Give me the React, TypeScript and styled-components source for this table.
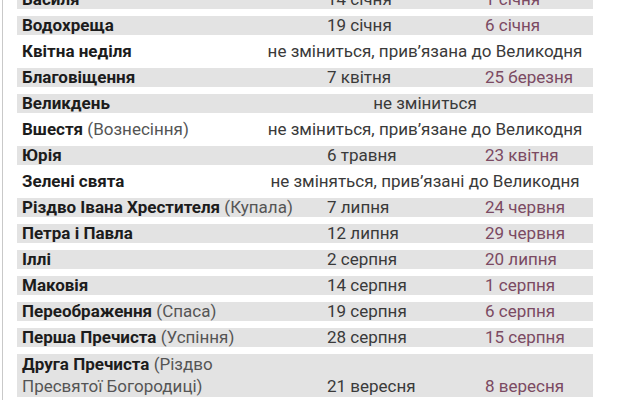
import React from "react";
import styled, { createGlobalStyle } from "styled-components";

const Global = createGlobalStyle`
  html, body { margin: 0; padding: 0; background: #ffffff; }
  body { width: 620px; height: 400px; overflow: hidden; }
`;

const Page = styled.div`
  width: 617px;
  height: 400px;
  margin-left: 2px;
  border-left: 1px solid #c9c9c9;
  padding-left: 14px;
  box-sizing: border-box;
  overflow: hidden;
  font-family: Roboto, "Liberation Sans", sans-serif;
  font-size: 17px;
  color: #3a3a3a;
`;

const List = styled.div`
  display: flex;
  flex-direction: column;
  gap: 7px;
  margin-top: -10px;
  width: 576px;
`;

const Band = styled.div<{ $grey: boolean; $tall?: boolean }>`
  background: ${(p) => (p.$grey ? "#e3e3e3" : "transparent")};
  line-height: ${(p) => (p.$tall ? "21.5px" : "19px")};
  height: ${(p) => (p.$tall ? "43px" : "19px")};
  padding-left: 5px;
  box-sizing: border-box;
  white-space: nowrap;
`;

const DateRow = styled(Band)`
  display: grid;
  grid-template-columns: 305px 158px 1fr;
  align-items: end;
`;

const SpanRow = styled(Band)`
  display: grid;
  grid-template-columns: 235px 1fr;
`;

const Name = styled.div`
  font-weight: 700;
  color: #1c1c1c;
`;

const Note = styled.span`
  font-weight: 400;
  color: #555555;
`;

const OldDate = styled.div`
  color: #3a3a3a;
`;

const NewDate = styled.div`
  color: #7b4a62;
`;

const Centered = styled.div`
  text-align: center;
  color: #3a3a3a;
`;

type Row =
  | { name: string; note?: string; old: string; now: string; grey: boolean }
  | { name: string; note?: string; span: string; grey: boolean };

const rows: Row[] = [
  { name: "Василя", old: "14 січня", now: "1 січня", grey: true },
  { name: "Водохреща", old: "19 січня", now: "6 січня", grey: true },
  { name: "Квітна неділя", span: "не зміниться, прив’язана до Великодня", grey: false },
  { name: "Благовіщення", old: "7 квітня", now: "25 березня", grey: true },
  { name: "Великдень", span: "не зміниться", grey: true },
  { name: "Вшестя", note: "(Вознесіння)", span: "не зміниться, прив’язане до Великодня", grey: false },
  { name: "Юрія", old: "6 травня", now: "23 квітня", grey: true },
  { name: "Зелені свята", span: "не зміняться, прив’язані до Великодня", grey: false },
  { name: "Різдво Івана Хрестителя", note: "(Купала)", old: "7 липня", now: "24 червня", grey: true },
  { name: "Петра і Павла", old: "12 липня", now: "29 червня", grey: true },
  { name: "Іллі", old: "2 серпня", now: "20 липня", grey: true },
  { name: "Маковія", old: "14 серпня", now: "1 серпня", grey: true },
  { name: "Переображення", note: "(Спаса)", old: "19 серпня", now: "6 серпня", grey: true },
  { name: "Перша Пречиста", note: "(Успіння)", old: "28 серпня", now: "15 серпня", grey: true },
];

export default function App() {
  return (
    <>
      <Global />
      <Page>
        <List>
          {rows.map((r) =>
            "span" in r ? (
              <SpanRow key={r.name} $grey={r.grey}>
                <Name>
                  {r.name}
                  {r.note && <Note> {r.note}</Note>}
                </Name>
                <Centered>{r.span}</Centered>
              </SpanRow>
            ) : (
              <DateRow key={r.name} $grey={r.grey}>
                <Name>
                  {r.name}
                  {r.note && <Note> {r.note}</Note>}
                </Name>
                <OldDate>{r.old}</OldDate>
                <NewDate>{r.now}</NewDate>
              </DateRow>
            )
          )}
          <DateRow $grey $tall>
            <Name>
              Друга Пречиста <Note>(Різдво</Note>
              <br />
              <Note>Пресвятої Богородиці)</Note>
            </Name>
            <OldDate>21 вересня</OldDate>
            <NewDate>8 вересня</NewDate>
          </DateRow>
        </List>
      </Page>
    </>
  );
}
